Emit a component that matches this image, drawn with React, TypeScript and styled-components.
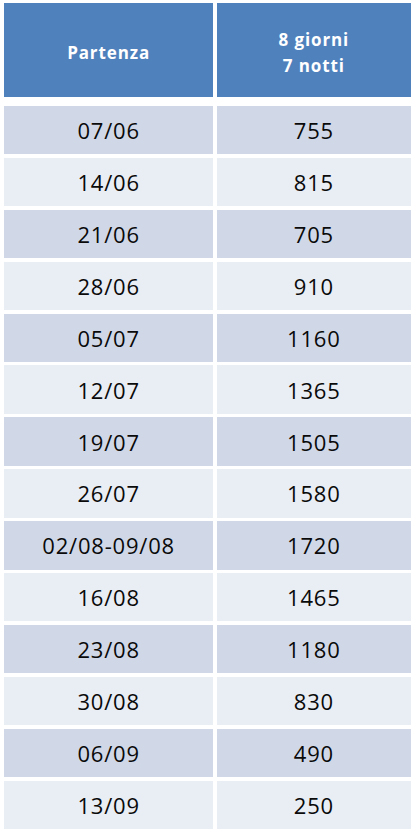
import React from "react";
import styled, { createGlobalStyle } from "styled-components";

const GlobalStyle = createGlobalStyle`
  html, body {
    margin: 0;
    padding: 0;
    background: #ffffff;
  }
  body {
    font-family: "Open Sans", "Noto Sans", sans-serif;
  }
`;

const Page = styled.div`
  padding: 3px 0 0 4px;
`;

const Table = styled.div`
  display: flex;
  flex-direction: column;
  gap: 9px;
  width: 407px;
`;

const HeaderRow = styled.div`
  display: grid;
  grid-template-columns: 209.3px 194.3px;
  column-gap: 3.4px;
  height: 94px;
`;

const Body = styled.div`
  display: grid;
  grid-template-columns: 209.3px 194.3px;
  column-gap: 3.4px;
  row-gap: 3.5px;
  grid-auto-rows: 48.4px;
`;

const HeaderCell = styled.div`
  background: #4f81bd;
  color: #ffffff;
  font-weight: 700;
  font-size: 17px;
  letter-spacing: 0.9px;
  line-height: 26px;
  display: flex;
  flex-direction: column;
  align-items: center;
  justify-content: center;
  padding-top: 6px;
  box-sizing: border-box;
  text-align: center;
`;

const Cell = styled.div<{ $odd: boolean }>`
  background: ${(p) => (p.$odd ? "#d0d8e8" : "#e9edf4")};
  color: #0a0a0a;
  font-size: 22px;
  letter-spacing: 0.8px;
  display: flex;
  align-items: center;
  justify-content: center;
`;

const rows: [string, string][] = [
  ["07/06", "755"],
  ["14/06", "815"],
  ["21/06", "705"],
  ["28/06", "910"],
  ["05/07", "1160"],
  ["12/07", "1365"],
  ["19/07", "1505"],
  ["26/07", "1580"],
  ["02/08-09/08", "1720"],
  ["16/08", "1465"],
  ["23/08", "1180"],
  ["30/08", "830"],
  ["06/09", "490"],
  ["13/09", "250"],
];

export default function App() {
  return (
    <Page>
      <GlobalStyle />
      <Table>
        <HeaderRow>
          <HeaderCell>Partenza</HeaderCell>
          <HeaderCell>
            <span>8 giorni</span>
            <span>7 notti</span>
          </HeaderCell>
        </HeaderRow>
        <Body>
          {rows.map(([date, price], i) => (
            <React.Fragment key={date}>
              <Cell $odd={i % 2 === 0}>{date}</Cell>
              <Cell $odd={i % 2 === 0}>{price}</Cell>
            </React.Fragment>
          ))}
        </Body>
      </Table>
    </Page>
  );
}
